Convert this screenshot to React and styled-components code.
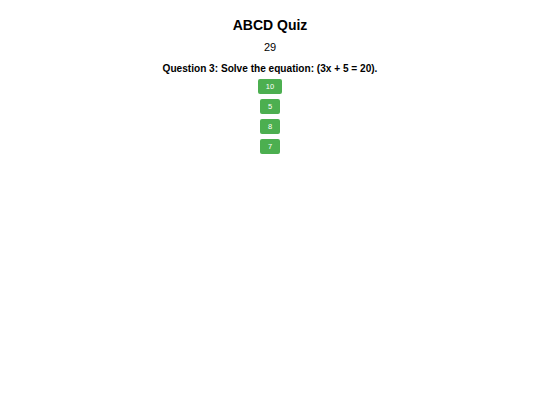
import React from 'react'
import styled, { createGlobalStyle } from 'styled-components'

const GlobalStyle = createGlobalStyle`
  body {
    margin: 0;
    background: #ffffff;
    font-family: 'Liberation Sans', Arial, sans-serif;
    color: #000000;
  }
`

const Page = styled.div`
  display: flex;
  flex-direction: column;
  align-items: center;
  padding-top: 17px;
`

const Title = styled.h1`
  margin: 0;
  font-size: 14px;
  font-weight: bold;
  line-height: 16px;
`

const Score = styled.div`
  margin-top: 8px;
  font-size: 11px;
  line-height: 13px;
`

const Question = styled.h2`
  margin: 8.5px 0 0;
  font-size: 10.1px;
  font-weight: bold;
  line-height: 12px;
`

const Options = styled.div`
  display: flex;
  flex-direction: column;
  align-items: center;
  gap: 5px;
  margin-top: 4.5px;
`

const OptionButton = styled.button`
  height: 15px;
  padding: 0 8px;
  border: none;
  border-radius: 2px;
  background: #4caf50;
  color: #ffffff;
  font-family: 'Liberation Sans', Arial, sans-serif;
  font-size: 7.5px;
  line-height: 15px;
  cursor: pointer;
`

const answers = ['10', '5', '8', '7']

const App = () => {
  return (
    <>
      <GlobalStyle />
      <Page>
        <Title>ABCD Quiz</Title>
        <Score>29</Score>
        <Question>Question 3: Solve the equation: (3x + 5 = 20).</Question>
        <Options>
          {answers.map((a) => (
            <OptionButton key={a}>{a}</OptionButton>
          ))}
        </Options>
      </Page>
    </>
  )
}

export default App
